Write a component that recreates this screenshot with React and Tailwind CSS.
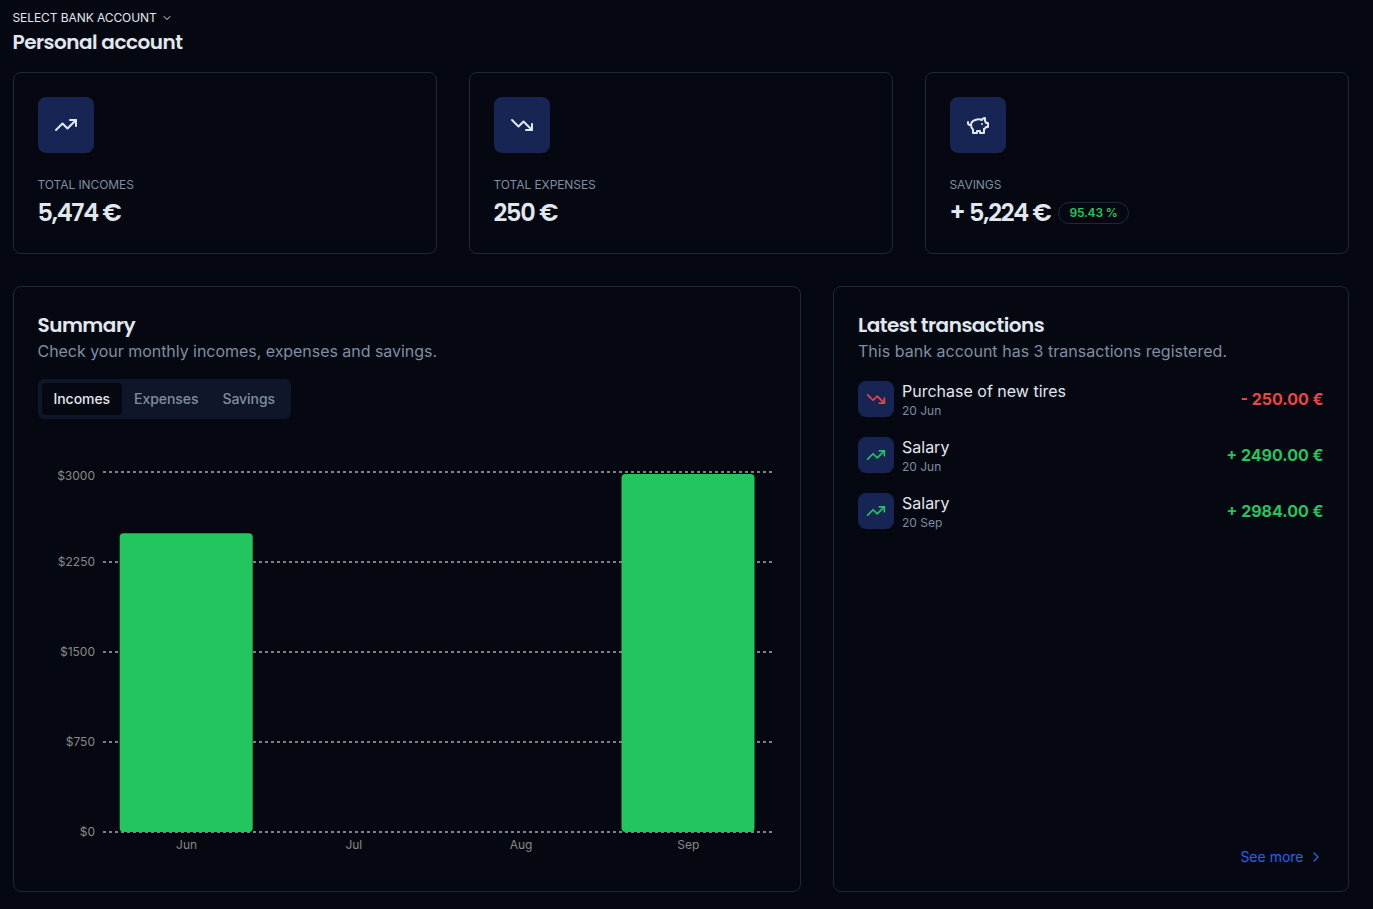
import React from "react";
import { ChevronDown, ChevronRight, TrendingDown, TrendingUp } from "lucide-react";

const heading = "font-['Poppins','Inter',sans-serif] font-semibold";

function PiggyBank() {
  return (
    <svg width="24" height="24" viewBox="0 0 24 24" fill="none" stroke="currentColor" strokeWidth="2" strokeLinecap="round" strokeLinejoin="round">
      <path d="M19 5c-1.5 0-2.8 1.4-3 2-3.5-1.5-11-.3-11 5 0 1.8 0 3 2 4.5V20h4v-2h3v2h4v-4c1-.5 1.7-1 2-2h2v-4h-2c0-1-.5-1.5-1-2V5z" />
      <path d="M2 9v1c0 1.1.9 2 2 2h1" />
      <path d="M16 11h.01" />
    </svg>
  );
}

function StatCard({ icon, label, value, badge }) {
  return (
    <div className="h-[182px] rounded-lg border border-[#1d283a] p-6">
      <div className="flex size-14 items-center justify-center rounded-lg bg-[#172554]">{icon}</div>
      <p className="mt-6 text-xs leading-4 tracking-[-0.08px] text-[#7f8ea3]">{label}</p>
      <div className="mt-1 flex items-center gap-2">
        <span className={`${heading} text-2xl leading-8 tracking-tighter whitespace-nowrap`}>{value}</span>
        {badge && (
          <span className="rounded-full border border-[#1d283a] px-2.5 py-0.5 text-xs leading-4 font-semibold tracking-[-0.2px] text-[#22c55e]">{badge}</span>
        )}
      </div>
    </div>
  );
}

const ticks = [
  { label: "$3000", y: 21, textY: 29 },
  { label: "$2250", y: 111, textY: 115 },
  { label: "$1500", y: 201, textY: 205 },
  { label: "$750", y: 291, textY: 295 },
  { label: "$0", y: 381, textY: 385 },
];
const months = ["Jun", "Jul", "Aug", "Sep"];

function Chart() {
  return (
    <svg width="738" height="416" viewBox="0 0 738 416" className="mt-8 block text-xs">
      {ticks.map((t) => (
        <g key={t.label}>
          <line x1="65" x2="734" y1={t.y} y2={t.y} stroke="#808085" strokeWidth="2" strokeDasharray="3 3" />
          <text x="57" y={t.textY} textAnchor="end" fill="#888888">{t.label}</text>
        </g>
      ))}
      <rect x="81.7" y="82.2" width="133" height="298.8" rx="4" fill="#22c55e" />
      <rect x="583.5" y="22.9" width="133" height="358.1" rx="4" fill="#22c55e" />
      {months.map((m, i) => (
        <text key={m} x={148.6 + i * 167.25} y="398" textAnchor="middle" fill="#888888">{m}</text>
      ))}
    </svg>
  );
}

function Transaction({ name, date, amount, income }) {
  const Icon = income ? TrendingUp : TrendingDown;
  const tone = income ? "text-[#22c55e]" : "text-[#ef4444]";
  return (
    <li className="flex h-9 items-center gap-2">
      <div className={`flex size-9 items-center justify-center rounded-lg bg-[#172554] ${tone}`}><Icon size={20} /></div>
      <div className="flex-1 pt-0.5">
        <p className="text-base leading-5">{name}</p>
        <p className="mt-0.5 text-xs leading-4 text-[#7f8ea3]">{date}</p>
      </div>
      <span className={`font-bold ${tone}`}>{amount}</span>
    </li>
  );
}

export default function App() {
  return (
    <main className="h-[909px] w-[1373px] overflow-hidden bg-[#050810] pt-2 pr-[24.5px] pl-[12.5px] font-['Inter',sans-serif] text-[#e1e7ef]">
      <div className="flex h-5 items-center gap-1 text-xs tracking-[-0.08px]">
        SELECT BANK ACCOUNT
        <ChevronDown size={12} />
      </div>
      <h1 className={`${heading} text-xl leading-7 tracking-tight`}>Personal account</h1>

      <section className="mt-4 grid grid-cols-3 gap-8">
        <StatCard icon={<TrendingUp />} label="TOTAL INCOMES" value="5,474 €" />
        <StatCard icon={<TrendingDown />} label="TOTAL EXPENSES" value="250 €" />
        <StatCard icon={<PiggyBank />} label="SAVINGS" value="+ 5,224 €" badge="95.43 %" />
      </section>

      <div className="mt-8 flex h-[606px] gap-8">
        <section className="w-[788.5px] rounded-lg border border-[#1d283a] p-6">
          <h2 className={`${heading} text-xl leading-7 tracking-tight`}>Summary</h2>
          <p className="text-base leading-6 tracking-[-0.04px] text-[#7f8ea3]">Check your monthly incomes, expenses and savings.</p>
          <div className="mt-4 flex h-10 w-fit items-center rounded-md bg-[#0f1629] p-1 text-sm font-medium tracking-[-0.06px] text-[#7f8ea3]">
            <button className="h-8 rounded-sm bg-[#050810] px-3 text-[#e1e7ef]">Incomes</button>
            <button className="h-8 px-3">Expenses</button>
            <button className="h-8 px-3">Savings</button>
          </div>
          <Chart />
        </section>

        <section className="flex flex-1 flex-col rounded-lg border border-[#1d283a] p-6">
          <h2 className={`${heading} text-xl leading-7 tracking-tight`}>Latest transactions</h2>
          <p className="text-base leading-6 tracking-[0.02px] text-[#7f8ea3]">This bank account has 3 transactions registered.</p>
          <ul className="mt-[18px] flex flex-1 flex-col gap-5">
            <Transaction name="Purchase of new tires" date="20 Jun" amount="- 250.00 €" />
            <Transaction name="Salary" date="20 Jun" amount="+ 2490.00 €" income />
            <Transaction name="Salary" date="20 Sep" amount="+ 2984.00 €" income />
          </ul>
          <a className="flex h-5 items-center gap-1 self-end text-sm text-[#2563eb]">
            See more
            <ChevronRight size={16} />
          </a>
        </section>
      </div>
    </main>
  );
}
